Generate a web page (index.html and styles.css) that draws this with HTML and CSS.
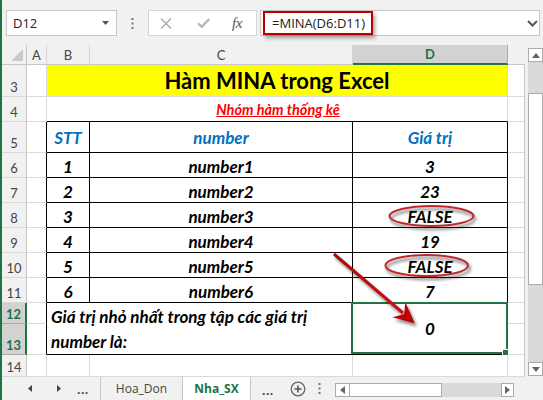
FILE: index.html
```html
<!DOCTYPE html>
<html lang="vi">
<head>
<meta charset="utf-8">
<title>MINA</title>
<link rel="stylesheet" href="styles.css">
</head>
<body>
<div class="app">
  <div class="edge"></div>
  <div class="main">
    <div class="frow">
      <div class="namebox"><span>D12</span><svg width="7" height="4" viewBox="0 0 7 4"><path d="M0 0H7L3.5 4Z" fill="#555"/></svg></div>
      <div class="vdots"><svg width="3" height="11" viewBox="0 0 3 11"><rect x="0.5" y="0" width="2" height="2" fill="#777"/><rect x="0.5" y="4.5" width="2" height="2" fill="#777"/><rect x="0.5" y="9" width="2" height="2" fill="#777"/></svg></div>
      <div class="fbtns">
        <svg class="ic-x" width="12" height="11" viewBox="0 0 12 11"><path d="M1 0.5L11 10.5M11 0.5L1 10.5" stroke="#a8a8a8" stroke-width="1.3" fill="none"/></svg>
        <svg class="ic-ok" width="13" height="10" viewBox="0 0 13 10"><path d="M1 5.2L4.8 8.8L12.2 1" stroke="#b4b4b4" stroke-width="2.2" fill="none"/></svg>
        <span class="fx">fx</span>
      </div>
      <div class="fbar">
        <span class="formula">=MINA(D6:D11)</span>
        <svg class="chev" width="11" height="7" viewBox="0 0 11 7"><path d="M1 1L5.5 5.5L10 1" stroke="#555" stroke-width="2" fill="none"/></svg>
      </div>
    </div>
    <div class="brow">
      <div class="grid">
        <div class="corner"><svg width="12" height="12" viewBox="0 0 12 12"><path d="M12 0V12H0Z" fill="#c9c9c9"/></svg></div>
        <div class="ch">A</div>
        <div class="ch">B</div>
        <div class="ch">C</div>
        <div class="ch sel">D</div>
        <div class="ch blank"></div>

        <div class="rh">3</div>
        <div class="c"></div>
        <div class="c title span3">Hàm MINA trong Excel</div>
        <div class="c e"></div>

        <div class="rh">4</div>
        <div class="c"></div>
        <div class="c sub span3"><span>Nhóm hàm thống kê</span></div>
        <div class="c e"></div>

        <div class="rh">5</div>
        <div class="c aedge"></div>
        <div class="t hd">STT</div>
        <div class="t hd">number</div>
        <div class="t hd">Giá trị</div>
        <div class="c e"></div>

        <div class="rh">6</div>
        <div class="c aedge"></div>
        <div class="t">1</div>
        <div class="t">number1</div>
        <div class="t">3</div>
        <div class="c e"></div>

        <div class="rh">7</div>
        <div class="c aedge"></div>
        <div class="t">2</div>
        <div class="t">number2</div>
        <div class="t">23</div>
        <div class="c e"></div>

        <div class="rh">8</div>
        <div class="c aedge"></div>
        <div class="t">3</div>
        <div class="t">number3</div>
        <div class="t">FALSE</div>
        <div class="c e"></div>

        <div class="rh">9</div>
        <div class="c aedge"></div>
        <div class="t">4</div>
        <div class="t">number4</div>
        <div class="t">19</div>
        <div class="c e"></div>

        <div class="rh">10</div>
        <div class="c aedge"></div>
        <div class="t">5</div>
        <div class="t">number5</div>
        <div class="t">FALSE</div>
        <div class="c e"></div>

        <div class="rh">11</div>
        <div class="c aedge"></div>
        <div class="t">6</div>
        <div class="t">number6</div>
        <div class="t">7</div>
        <div class="c e"></div>

        <div class="rh rsel">12</div>
        <div class="c aedge"></div>
        <div class="t note"><div>Giá trị nhỏ nhất trong tập các giá trị<br>number là:</div></div>
        <div class="t val">0<span class="selbox"></span><span class="handle"></span></div>
        <div class="c e"></div>

        <div class="rh rsel">13</div>
        <div class="c aedge"></div>
        <div class="c e"></div>

        <div class="rh">14</div>
        <div class="c"></div>
        <div class="c"></div>
        <div class="c"></div>
        <div class="c"></div>
        <div class="c e"></div>
      </div>
      <div class="vscroll">
        <div class="vs-gap"></div>
        <div class="vs-btn"><svg width="8" height="5" viewBox="0 0 8 5"><path d="M0 5H8L4 0Z" fill="#666"/></svg></div>
        <div class="vs-track t1"></div>
        <div class="vs-thumb"></div>
        <div class="vs-track t2"></div>
        <div class="vs-btn"><svg width="8" height="5" viewBox="0 0 8 5"><path d="M0 0H8L4 5Z" fill="#666"/></svg></div>
      </div>
    </div>
    <div class="tabbar">
      <div class="nav">
        <svg class="nl" width="4" height="7" viewBox="0 0 4 7"><path d="M4 0V7L0 3.5Z" fill="#444"/></svg>
        <svg class="nr" width="4" height="7" viewBox="0 0 4 7"><path d="M0 0V7L4 3.5Z" fill="#444"/></svg>
        <span class="dots">...</span>
      </div>
      <div class="tab">Hoa_Don</div>
      <div class="tab active">Nha_SX</div>
      <span class="dots more">...</span>
      <svg class="plus" width="16" height="16" viewBox="0 0 16 16"><circle cx="8" cy="8" r="6.8" fill="none" stroke="#666" stroke-width="1.3"/><path d="M8 4.5V11.5M4.5 8H11.5" stroke="#555" stroke-width="1.6"/></svg>
      <svg class="kebab" width="3" height="11" viewBox="0 0 3 11"><rect x="0.5" y="0" width="2" height="2" fill="#777"/><rect x="0.5" y="4.5" width="2" height="2" fill="#777"/><rect x="0.5" y="9" width="2" height="2" fill="#777"/></svg>
      <div class="hscroll">
        <div class="hs-btn"><svg width="5" height="8" viewBox="0 0 5 8"><path d="M5 0V8L0 4Z" fill="#666"/></svg></div>
        <div class="hs-thumb"></div>
        <div class="hs-track"></div>
        <div class="hs-btn r"><svg width="5" height="8" viewBox="0 0 5 8"><path d="M0 0V8L5 4Z" fill="#666"/></svg></div>
      </div>
    </div>
  </div>
  <svg class="annot" width="543" height="400" viewBox="0 0 543 400">
    <defs>
      <filter id="blur" x="-30%" y="-60%" width="160%" height="220%"><feGaussianBlur stdDeviation="1.6"/></filter>
      <linearGradient id="ag" x1="0" y1="0" x2="1" y2="1"><stop offset="0" stop-color="#a50a0a"/><stop offset="1" stop-color="#d01010"/></linearGradient>
    </defs>
    <g filter="url(#blur)" opacity="0.45">
      <ellipse cx="433" cy="219" rx="42" ry="10" fill="none" stroke="#000" stroke-width="2.5"/>
      <ellipse cx="428.5" cy="268.5" rx="41.5" ry="10.5" fill="none" stroke="#000" stroke-width="2.5"/>
      <path d="M336 257L406 317" stroke="#000" stroke-width="3.5"/>
      <path d="M417 326.5L394.5 320.5L406.5 317.5L407.5 305Z" fill="#000"/>
    </g>
    <ellipse cx="431.5" cy="216" rx="42" ry="10" fill="none" stroke="#c0282d" stroke-width="2"/>
    <ellipse cx="426.7" cy="265.5" rx="41.3" ry="10.5" fill="none" stroke="#c0282d" stroke-width="2"/>
    <path d="M334 254L403 313" stroke="url(#ag)" stroke-width="3"/>
    <path d="M414.7 323.3L392.3 317.2L404.1 314.2L405.3 302Z" fill="#c00000"/>
  </svg>
</div>
</body>
</html>
```
FILE: styles.css
```css
html, body {
  margin: 0;
  padding: 0;
}
body {
  width: 543px;
  height: 400px;
  overflow: hidden;
  background: #f1f1f1;
}
.app {
  position: relative;
  display: flex;
  width: 543px;
  height: 400px;
  font-family: Lato, "Liberation Sans", sans-serif;
}
.edge {
  flex: none;
  width: 2px;
  background: #217346;
}
.main {
  width: 541px;
  display: flex;
  flex-direction: column;
}

/* formula row */
.frow {
  height: 45px;
  box-sizing: border-box;
  padding-top: 10px;
  display: flex;
  align-items: flex-start;
}
.namebox {
  margin-left: 4px;
  width: 111px;
  height: 26px;
  box-sizing: border-box;
  border: 1px solid #c6c6c6;
  background: #fff;
  display: flex;
  align-items: center;
  justify-content: space-between;
  padding: 0 7px 0 6px;
  font: 13px "Open Sans", sans-serif;
  color: #222;
}
.vdots {
  width: 31px;
  height: 26px;
  display: flex;
  justify-content: center;
  align-items: center;
}
.fbtns {
  width: 109px;
  height: 26px;
  box-sizing: border-box;
  border: 1px solid #d4d4d4;
  background: #fff;
  display: flex;
  align-items: center;
  padding-left: 11px;
}
.ic-ok {
  margin-left: 25px;
}
.fx {
  margin-left: 22px;
  font: italic 15px "Liberation Serif", serif;
  color: #555;
  letter-spacing: -0.5px;
}
.fbar {
  margin-left: 3px;
  width: 280px;
  height: 26px;
  box-sizing: border-box;
  border: 1px solid #c6c6c6;
  background: #fff;
  display: flex;
  align-items: center;
  justify-content: space-between;
}
.formula {
  margin-left: 2px;
  height: 24px;
  box-sizing: border-box;
  border: 2px solid #c00000;
  padding: 0 6px 0 7px;
  display: flex;
  align-items: center;
  font: 13px "Open Sans", sans-serif;
  color: #222;
  box-shadow: 2px 3px 4px rgba(0, 0, 0, 0.35);
}
.chev {
  margin-right: 1px;
}

/* sheet */
.brow {
  display: flex;
  height: 332px;
}
.grid {
  width: 523px;
  display: grid;
  grid-template-columns: 25px 20px 43px 263px 155px 17px;
  grid-template-rows: 20px 32px 25px 31px repeat(6, 25px) 21px 31px 22px;
}
.grid > div {
  box-sizing: border-box;
}
.corner {
  background: #f1f1f1;
  border-right: 1px solid #c6c6c6;
  border-bottom: 1px solid #c6c6c6;
  display: flex;
  align-items: flex-end;
  justify-content: flex-end;
  padding: 0 3px 3px 0;
}
.ch {
  background: #f1f1f1;
  border-right: 1px solid #d4d4d4;
  border-bottom: 1px solid #c6c6c6;
  display: flex;
  align-items: center;
  justify-content: center;
  font-size: 13px;
  color: #444;
}
.ch.sel {
  background: #d2d2d2;
  color: #217346;
  font-weight: bold;
  border-right-color: #ababab;
  border-bottom: 2px solid #217346;
}
.ch.blank {
  border-right: none;
}
.rh {
  background: #f1f1f1;
  border-right: 1px solid #c6c6c6;
  border-bottom: 1px solid #d9d9d9;
  display: flex;
  align-items: flex-end;
  justify-content: center;
  padding-bottom: 2px;
  line-height: 14px;
  font-size: 13px;
  color: #444;
}
.rh.rsel {
  background: #d2d2d2;
  color: #217346;
  font-weight: bold;
  border-right: 2px solid #217346;
  border-bottom-color: #ababab;
}
.c {
  background: #fff;
  border-right: 1px solid #dadada;
  border-bottom: 1px solid #dadada;
}
.c.e {
  border-right-color: #c6c6c6;
}
.c.aedge {
  border-right-color: #000;
}
.span3 {
  grid-column: span 3;
}
.title {
  background: #ffff00;
  display: flex;
  align-items: center;
  justify-content: center;
  font-weight: bold;
  font-size: 22px;
  color: #000;
}
.sub {
  border-bottom-color: #000;
  display: flex;
  align-items: center;
  justify-content: center;
  padding-left: 2px;
  font-weight: bold;
  font-style: italic;
  font-size: 14.5px;
  color: #ff0000;
  text-decoration: underline;
}
.t {
  background: #fff;
  border-right: 1px solid #000;
  border-bottom: 1px solid #000;
  display: flex;
  align-items: center;
  justify-content: center;
  padding-top: 2px;
  font-weight: bold;
  font-style: italic;
  font-size: 17px;
  color: #000;
}
.t.hd {
  color: #0070c0;
  padding-top: 0;
}
.note {
  grid-column: span 2;
  grid-row: span 2;
  justify-content: flex-start;
  padding: 0 0 0 4px;
  line-height: 25px;
}
.val {
  grid-row: span 2;
  position: relative;
  padding-top: 0;
}
.selbox {
  position: absolute;
  left: -2px;
  top: -1px;
  right: -1px;
  bottom: 0;
  border: 2px solid #217346;
}
.handle {
  position: absolute;
  right: -2px;
  bottom: -2px;
  width: 5px;
  height: 5px;
  background: #217346;
  border: 1px solid #fff;
}

/* vertical scroll */
.vscroll {
  margin-left: 3px;
  width: 15px;
  display: flex;
  flex-direction: column;
}
.vs-gap {
  height: 3px;
}
.vs-btn {
  height: 14px;
  box-sizing: border-box;
  border: 1px solid #ababab;
  background: #fff;
  display: flex;
  align-items: center;
  justify-content: center;
}
.vs-track {
  background: #dadada;
}
.vs-track.t1 {
  height: 31px;
}
.vs-track.t2 {
  height: 77px;
}
.vs-thumb {
  height: 192px;
  box-sizing: border-box;
  border: 1px solid #ababab;
  background: #fff;
}

/* tab bar */
.tabbar {
  height: 23px;
  display: flex;
  align-items: stretch;
  background: #f1f1f1;
  font: 12px "Open Sans", sans-serif;
}
.nav {
  width: 98px;
  display: flex;
  align-items: center;
}
.nl {
  margin-left: 26px;
}
.nr {
  margin-left: 25px;
}
.dots {
  font: bold 12px "Open Sans", sans-serif;
  color: #2d5a3d;
  letter-spacing: 0.5px;
  line-height: 23px;
  margin-left: 16px;
  padding-top: 2px;
}
.tab {
  width: 82px;
  box-sizing: border-box;
  border-left: 1px solid #c6c6c6;
  display: flex;
  align-items: center;
  justify-content: center;
  color: #444;
}
.tab.active {
  width: 69px;
  background: #fff;
  color: #217346;
  font-weight: bold;
  border-right: 1px solid #c6c6c6;
}
.dots.more {
  margin-left: 11px;
  color: #444;
}
.plus {
  align-self: center;
  margin-left: 16px;
}
.kebab {
  align-self: center;
  margin-left: 12px;
}
.hscroll {
  margin-left: 14px;
  margin-top: 6px;
  width: 179px;
  height: 14px;
  display: flex;
}
.hs-btn {
  width: 15px;
  box-sizing: border-box;
  border: 1px solid #ababab;
  background: #fff;
  display: flex;
  align-items: center;
  justify-content: center;
}
.hs-btn.r {
  width: 13px;
}
.hs-thumb {
  width: 92px;
  box-sizing: border-box;
  border: 1px solid #ababab;
  border-left: none;
  background: #fff;
}
.hs-track {
  width: 59px;
  background: #dadada;
}

/* annotation overlay */
.annot {
  position: absolute;
  left: 0;
  top: 0;
  pointer-events: none;
}
```
